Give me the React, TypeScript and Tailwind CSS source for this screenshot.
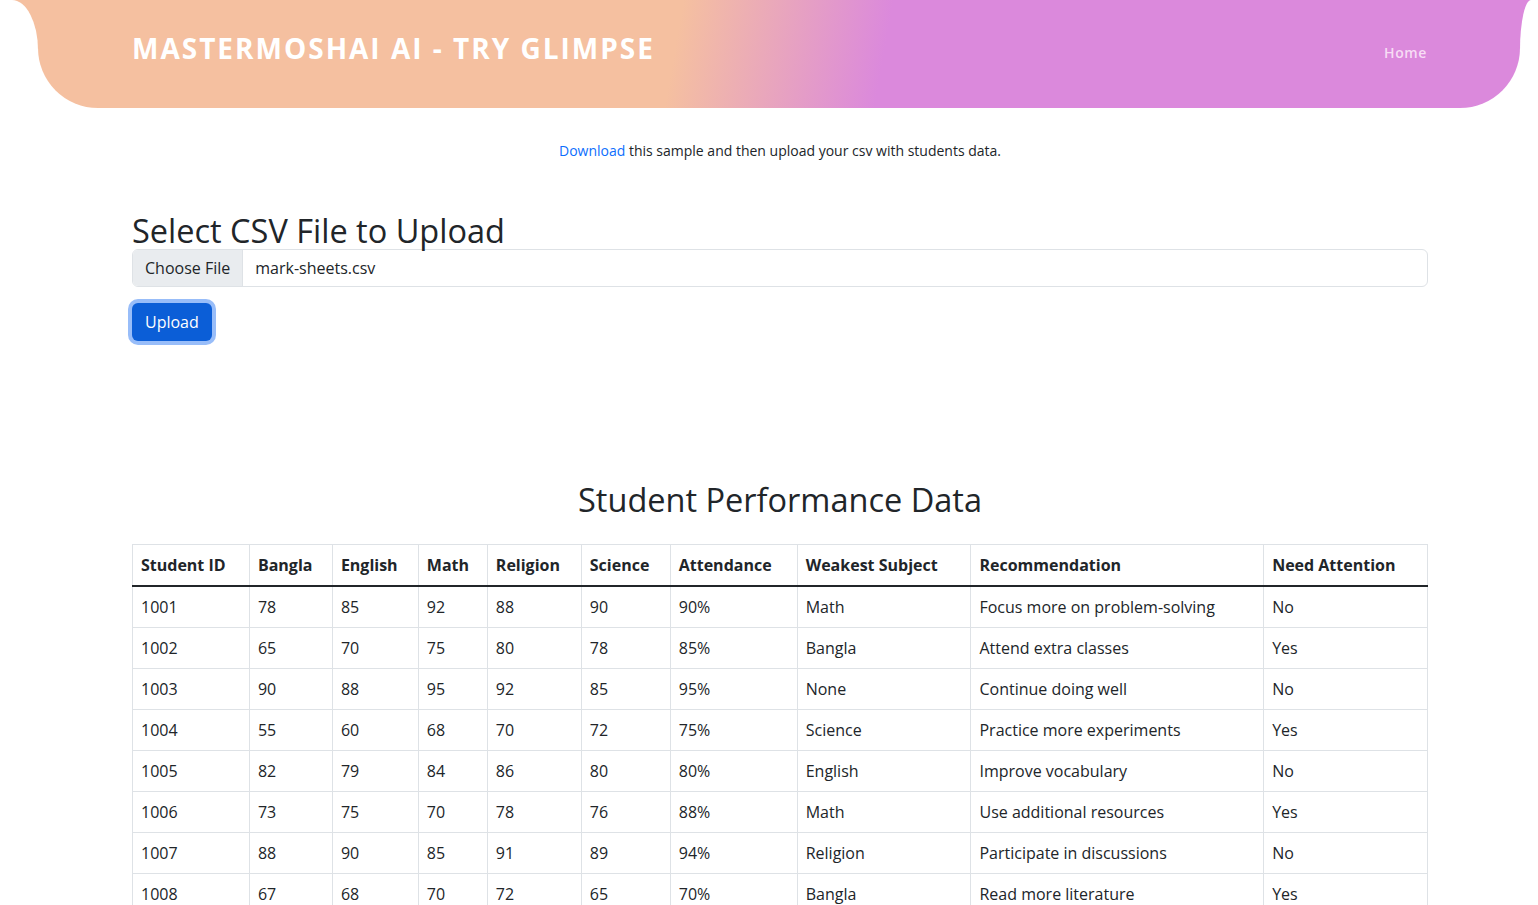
import React from 'react';

const rows = [
  ['1001', '78', '85', '92', '88', '90', '90%', 'Math', 'Focus more on problem-solving', 'No'],
  ['1002', '65', '70', '75', '80', '78', '85%', 'Bangla', 'Attend extra classes', 'Yes'],
  ['1003', '90', '88', '95', '92', '85', '95%', 'None', 'Continue doing well', 'No'],
  ['1004', '55', '60', '68', '70', '72', '75%', 'Science', 'Practice more experiments', 'Yes'],
  ['1005', '82', '79', '84', '86', '80', '80%', 'English', 'Improve vocabulary', 'No'],
  ['1006', '73', '75', '70', '78', '76', '88%', 'Math', 'Use additional resources', 'Yes'],
  ['1007', '88', '90', '85', '91', '89', '94%', 'Religion', 'Participate in discussions', 'No'],
  ['1008', '67', '68', '70', '72', '65', '70%', 'Bangla', 'Read more literature', 'Yes'],
  ['1009', '91', '87', '89', '90', '92', '96%', 'None', 'Continue doing well', 'No'],
  ['1010', '60', '62', '58', '66', '64', '72%', 'Math', 'Focus more on problem-solving', 'Yes'],
];

const headers = ['Student ID', 'Bangla', 'English', 'Math', 'Religion', 'Science', 'Attendance', 'Weakest Subject', 'Recommendation', 'Need Attention'];
const widths = ['w-[117px]', 'w-[83px]', 'w-[86px]', 'w-[69px]', 'w-[94px]', 'w-[89px]', 'w-[127px]', 'w-[174px]', 'w-[293px]', 'w-[164px]'];

export default function App() {
  return (
    <div className="min-h-screen bg-white text-[#212529] font-['Open_Sans',sans-serif]">
      {/* header */}
      <div className="relative ml-[38px] mr-[18px] h-[108px] rounded-b-[60px] bg-[linear-gradient(100deg,#f5c0a0_43%,#db89dc_57%)]">
        <div className="absolute left-[-26px] top-0 w-[26px] h-[50px] bg-[#f5c0a0]">
          <div className="w-full h-full bg-white rounded-tr-[100%]" />
        </div>
        <div className="absolute right-[-11px] top-0 w-[11px] h-[50px] bg-[#db89dc]">
          <div className="w-full h-full bg-white rounded-tl-[100%]" />
        </div>
        <div className="flex justify-between items-start pl-[94px] pr-[93px]">
          <div className="pt-[31px] text-[28px] leading-[34px] font-bold tracking-[2px] text-white">MASTERMOSHAI AI - TRY GLIMPSE</div>
          <a className="pt-[43px] text-[14px] leading-[20px] font-semibold tracking-[0.6px] text-[#f7dcf5]">Home</a>
        </div>
      </div>

      <div className="ml-[132px] w-[1296px]">
        <p className="mt-[32px] text-center text-[14px] leading-[21px]">
          <a className="text-[#0d6efd]">Download</a> this sample and then upload your csv with students data.
        </p>

        <h2 className="mt-[51px] text-[32.5px] leading-[37px] font-medium">Select CSV File to Upload</h2>
        <div className="flex h-[38px] border border-[#dee2e6] rounded-[6px] overflow-hidden text-[16px]">
          <div className="flex items-center px-3 bg-[#e9ecef] border-r border-[#dee2e6]">Choose File</div>
          <div className="flex items-center px-3">mark-sheets.csv</div>
        </div>
        <button className="mt-4 h-[38px] px-[13px] bg-[#0b5ed7] text-white text-[16px] rounded-[6px] ring-4 ring-[#98bdf9]">Upload</button>

        <h2 className="mt-[140px] text-center text-[32.5px] leading-[38px] font-medium">Student Performance Data</h2>
        <table className="mt-[25px] w-full border-collapse text-[16px] leading-[24px]">
          <thead>
            <tr>
              {headers.map((h, i) => (
                <th key={h} className={`${widths[i]} text-left font-bold px-2 py-2 border border-[#dee2e6] border-b-2 border-b-[#212529]`}>{h}</th>
              ))}
            </tr>
          </thead>
          <tbody>
            {rows.map((r) => (
              <tr key={r[0]}>
                {r.map((c, i) => (
                  <td key={i} className="px-2 py-2 border border-[#dee2e6]">{c}</td>
                ))}
              </tr>
            ))}
          </tbody>
        </table>
      </div>
    </div>
  );
}
